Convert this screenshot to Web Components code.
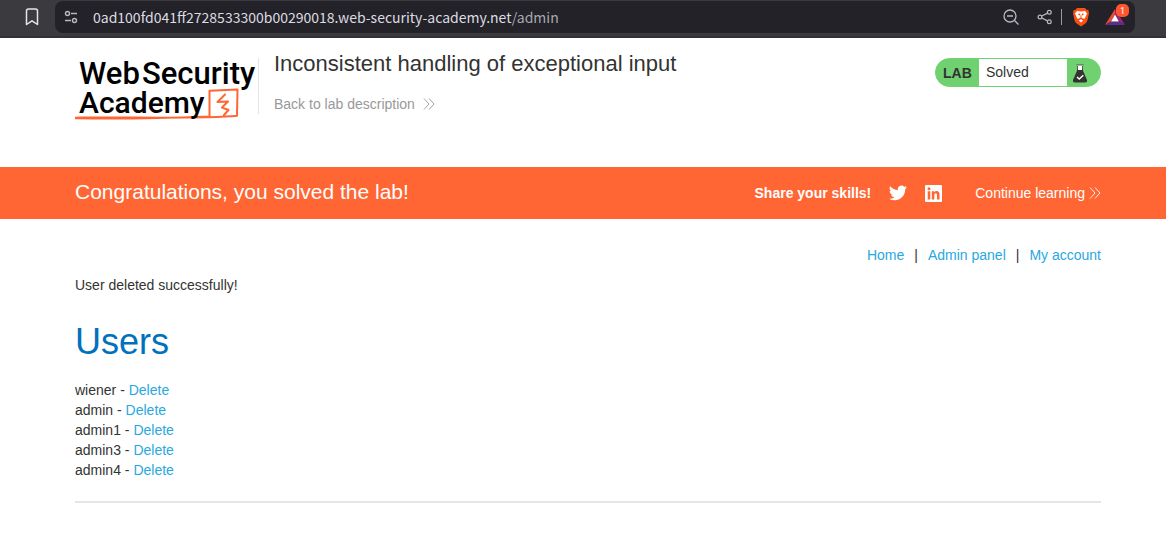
<!DOCTYPE html>
<html lang="en">
<head>
<meta charset="utf-8">
<title>Inconsistent handling of exceptional input</title>
<style>
body { margin: 0; background: #fff; color: #333332; font: 14px/20px "Liberation Sans", Arial, sans-serif; }
</style>
</head>
<body>
<browser-bar></browser-bar>
<lab-header heading="Inconsistent handling of exceptional input" status="Solved"></lab-header>
<solved-banner>Congratulations, you solved the lab!</solved-banner>
<lab-page></lab-page>

<script>
const define = (name, html, setup) => customElements.define(name, class extends HTMLElement {
  constructor() {
    super();
    const template = document.createElement('template');
    template.innerHTML = html;
    this.attachShadow({ mode: 'open' }).append(template.content.cloneNode(true));
  }
  connectedCallback() { if (setup) setup(this, this.shadowRoot); }
});

define('double-chevron', `
<style>:host { display: inline-flex; } svg { display: block; }</style>
<svg width="12" height="12" viewBox="0 0 12 12" fill="none" stroke="currentColor" stroke-width="0.9" aria-hidden="true"><path d="M1 .5 6 6 1 11.5M6 .5 11 6 6 11.5"/></svg>`);

define('browser-bar', `
<style>
:host { display: flex; box-sizing: border-box; height: 38px; padding: 1px 31px 0 20px; align-items: flex-start; gap: 11px; background: #3b3a3f; border-bottom: 2px solid #323136; }
button { appearance: none; border: 0; padding: 0; margin: 0; background: none; color: #b9b8c0; display: grid; place-items: center; position: relative; }
svg { display: block; }
.mark { width: 24px; height: 32px; color: #e6e5ea; }
.address { flex: 1; min-width: 0; display: flex; align-items: center; height: 32px; box-sizing: border-box; padding: 0 9px 0 8px; border-radius: 8px; background: #232228; }
.url { flex: 1; min-width: 0; margin-left: 14px; overflow: hidden; white-space: nowrap; color: #dddce2; font: 14px/20px "Noto Sans CJK SC", "Noto Sans", sans-serif; }
.url span { color: #a9a8b0; }
.tools { display: flex; align-items: center; }
.zoom { width: 18px; margin-right: 17px; }
.share { width: 16px; }
.line { width: 1px; height: 16px; margin: 0 10px 0 8px; background: #9b9aa2; }
.shield { width: 18px; margin-right: 15px; }
.rewards { width: 20px; margin-right: 1px; }
.badge { position: absolute; top: -4px; right: -4px; width: 13px; height: 13px; border-radius: 5px; background: #ff5630; color: #fff; font: 9px/13px "Noto Sans", sans-serif; text-align: center; }
</style>
<button class="mark" aria-label="Bookmark"><svg width="14" height="18" viewBox="0 0 14 18" fill="none" stroke="currentColor" stroke-width="1.5" stroke-linejoin="round"><path d="M1.5 3Q1.500 1 3.500 1H10.500Q12.500 1 12.500 3V16.500L7 12.800 1.500 16.500Z"/></svg></button>
<div class="address">
  <button aria-label="Site information"><svg width="16" height="16" viewBox="0 0 16 16" fill="none" stroke="currentColor" stroke-width="1.400"><circle cx="4.500" cy="4.500" r="2"/><path d="M8 4.500H14M2 11.500H8"/><circle cx="11.500" cy="11.500" r="2"/></svg></button>
  <div class="url" role="textbox" aria-label="Address">0ad100fd041ff2728533300b00290018.web-security-academy.net<span>/admin</span></div>
  <div class="tools">
    <button class="zoom" aria-label="Zoom out"><svg width="18" height="18" viewBox="0 0 18 18" fill="none" stroke="currentColor" stroke-width="1.300"><circle cx="8" cy="8" r="6"/><path d="M5 8H11M12.500 12.500 16.500 16.500"/></svg></button>
    <button class="share" aria-label="Share"><svg width="16" height="16" viewBox="0 0 16 16" fill="none" stroke="currentColor" stroke-width="1.200"><path d="M4.700 7 10.600 4.100M4.700 9 10.600 11.900"/><circle cx="3" cy="8" r="1.900"/><circle cx="12.300" cy="3.300" r="1.900"/><circle cx="12.300" cy="12.700" r="1.900"/></svg></button>
    <span class="line"></span>
    <button class="shield" aria-label="Shields"><svg width="18" height="20" viewBox="0 0 18 20"><path fill="#fb5012" d="M5 1H13L14.500 2.800 16.500 3.200 17 6.200 15.400 13.500Q14.900 15.500 13 16.800L9 19.500 5 16.800Q3.100 15.500 2.600 13.500L1 6.200 1.500 3.200 3.500 2.800Z"/><path fill="#fff" d="M5 4 9 4.500 13 4 15 6.600 13.200 10.500 12.300 12 9.500 10.800V9L11 8 12.500 6.900 10 6.500 9.400 9H8.600L8 6.500 5.500 6.900 7 8 8.500 9V10.800L5.700 12 4.800 10.500 3 6.600ZM6.800 13.500 9 12.200 11.200 13.500 9 15.500Z"/></svg></button>
    <button class="rewards" aria-label="Rewards"><svg width="20" height="18" viewBox="0 0 20 18"><path fill="#f2462d" d="M10 1 0 17 6 13.500 10 6Z"/><path fill="#a3237d" d="M10 1V6L14.500 13.500 20 17Z"/><path fill="#5b2c91" d="M0 17 6 13.500H14.500L20 17Z"/><path fill="#fff" d="M10 6.500 14 13.500H6Z"/></svg><span class="badge">1</span></button>
  </div>
</div>`);

define('academy-logo', `
<style>:host { display: block; } svg { display: block; } text { font: 500 31px Roboto, sans-serif; fill: #000; } .second { font-size: 30px; }</style>
<svg width="182" height="70" viewBox="0 0 182 70" role="img" aria-label="Web Security Academy">
  <path fill="none" stroke="#ff6633" stroke-width="2" stroke-linecap="round" stroke-linejoin="round" d="M2 65.300Q60 66.300 134.500 63.500V37.700L162.500 36.500 162 62.800Q140 65 60 64.600T2 65.300M150 41.500 142.500 49 153 48.500 147 54.500 153.500 57 149 62"/>
  <text x="4" y="31">Web</text><text x="67" y="31">Security</text><text class="second" x="4" y="60">Academy</text>
</svg>`);

define('lab-status', `
<style>
:host { display: flex; box-sizing: border-box; width: 166px; height: 29px; border: 1px solid #6fd16f; border-radius: 15px; overflow: hidden; background: #6fd16f; line-height: 27px; }
b { width: 43px; box-sizing: border-box; padding: 1px 0 0 7px; }
.state { width: 88px; box-sizing: border-box; padding-left: 7px; background: #fff; }
svg { display: block; margin: 5px 0 0 5px; }
</style>
<b>LAB</b><span class="state"><slot></slot></span>
<svg width="16" height="19" viewBox="0 0 16 19" aria-hidden="true"><path fill="#fff" d="M5 1H11L10 7H6Z"/><path fill="none" stroke="#333332" stroke-width="0.8" d="M4.500 1H11.500M5.500 2V7M10.500 2V7"/><path fill="#333332" d="M5.300 6H10.700L15 16Q15.500 18.500 13 18.500H3Q.5 18.500 1 16Z"/><path fill="none" stroke="#fff" stroke-width="1.500" d="M5 13 7.300 15 11.300 11.300"/></svg>`);

define('lab-header', `
<style>
:host { display: flex; box-sizing: border-box; min-height: 129px; padding: 15px 65px 0 75px; align-items: flex-start; }
.titles { flex: 1; min-width: 0; margin: 5px 0 0 1px; padding-left: 15px; border-left: 1px solid #e4e4e4; height: 56px; }
h1 { margin: -7px 0 16px; font-size: 22px; line-height: 26px; font-weight: 400; }
a { display: inline-flex; align-items: center; gap: 8px; color: #999; text-decoration: none; line-height: 22px; }
lab-status { margin-top: 5px; }
</style>
<academy-logo></academy-logo>
<div class="titles"><h1></h1><a href="#">Back to lab description<double-chevron></double-chevron></a></div>
<lab-status></lab-status>`, (host, root) => {
  root.querySelector('h1').textContent = host.getAttribute('heading');
  root.querySelector('lab-status').textContent = host.getAttribute('status');
});

define('solved-banner', `
<style>
:host { display: flex; box-sizing: border-box; min-height: 52px; padding: 0 65px 0 75px; align-items: center; background: #ff6633; color: #fff; }
h2 { flex: 1; margin: 0; padding-bottom: 2px; font-size: 21px; line-height: 26px; font-weight: 400; }
.share, a { display: flex; align-items: center; }
.share { gap: 18px; margin-right: 33px; }
a { color: inherit; text-decoration: none; gap: 4px; }
svg { display: block; }
</style>
<h2><slot></slot></h2>
<div class="share"><b>Share your skills!</b>
<a href="#" aria-label="Twitter"><svg width="18" height="18" viewBox="0 0 24 24" fill="#fff"><path d="M23.950 4.570a10 10 0 0 1-2.820.770 4.960 4.960 0 0 0 2.160-2.720c-.950.550-2 .960-3.130 1.180a4.920 4.920 0 0 0-8.380 4.480C7.690 8.090 4.070 6.130 1.640 3.160a4.930 4.930 0 0 0 1.520 6.570 4.900 4.900 0 0 1-2.230-.610v.060a4.920 4.920 0 0 0 3.950 4.830 5 5 0 0 1-2.210.080 4.940 4.940 0 0 0 4.600 3.420A9.870 9.870 0 0 1 0 19.540 13.940 13.940 0 0 0 7.550 21.750c9.050 0 14-7.500 14-13.980 0-.210 0-.420-.020-.630a9.940 9.940 0 0 0 2.420-2.570Z"/></svg></a>
<a href="#" aria-label="LinkedIn"><svg width="17" height="17" viewBox="0 0 17 17"><path fill="#fff" d="M1 0H16Q17 0 17 1V16Q17 17 16 17H1Q0 17 0 16V1Q0 0 1 0Z"/><circle cx="4" cy="3.800" r="1.500" fill="#ff6633"/><path fill="#ff6633" d="M2.700 6.300H5.300V14.500H2.700ZM6.800 6.300H9.200V7.500Q10 6.100 11.700 6.100 14.500 6.200 14.500 9.500V14.500H12V10Q12 8.200 10.700 8.200 9.300 8.200 9.300 10V14.500H6.800Z"/></svg></a></div>
<a href="#">Continue learning<double-chevron></double-chevron></a>`);

define('user-row', `
<style>:host { display: block; } a { color: #29a8e0; text-decoration: none; }</style>
<slot></slot> - <a href="#">Delete</a>`);

define('lab-page', `
<style>
:host { display: block; padding: 26px 65px 0 75px; }
nav { display: flex; justify-content: flex-end; gap: 10px; }
a { color: #29a8e0; text-decoration: none; }
p { margin: 10px 0 25px; }
h1 { margin: 0 0 16px; color: #0071bc; font-size: 36px; line-height: 44px; font-weight: 400; }
hr { margin: 21px 0 0; border: 0; height: 2px; background: #e5e5e5; }
</style>
<nav><a href="#">Home</a><span>|</span><a href="#">Admin panel</a><span>|</span><a href="#">My account</a></nav>
<p>User deleted successfully!</p>
<h1>Users</h1>
<section><user-row>wiener</user-row><user-row>admin</user-row><user-row>admin1</user-row><user-row>admin3</user-row><user-row>admin4</user-row></section>
<hr>`);
</script>
</body>
</html>
